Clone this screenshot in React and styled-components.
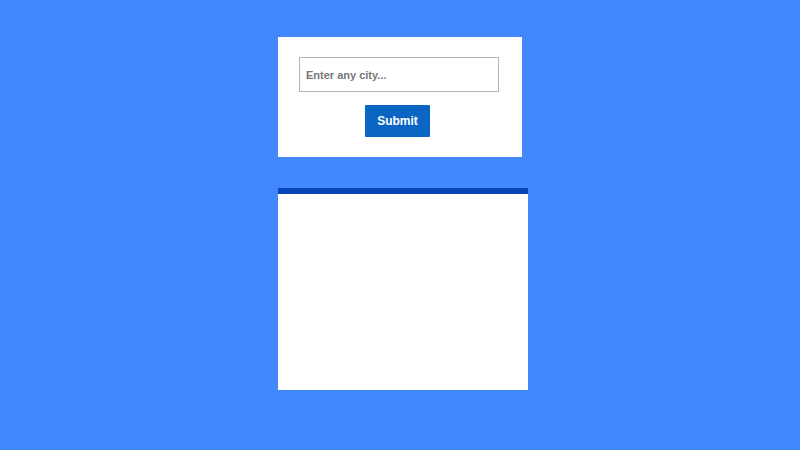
import React from "react";
import styled, { createGlobalStyle } from "styled-components";

const Global = createGlobalStyle`
  html, body { margin: 0; padding: 0; }
  body { background: #4287fe; font-family: "Liberation Sans", Arial, sans-serif; }
`;

const Page = styled.div`
  width: 800px;
  height: 450px;
  box-sizing: border-box;
  padding: 37px 0 0 278px;
  display: flex;
  flex-direction: column;
  gap: 31px;
`;

const FormCard = styled.form`
  width: 244px;
  height: 120px;
  box-sizing: border-box;
  background: #fff;
  padding: 20px 0 0 21px;
  display: flex;
  flex-direction: column;
  align-items: flex-start;
  gap: 13px;
`;

const Input = styled.input`
  width: 200px;
  height: 35px;
  box-sizing: border-box;
  border: 1px solid #b5b5b5;
  padding: 0 6px;
  margin: 0;
  font-family: "Liberation Sans", Arial, sans-serif;
  font-weight: bold;
  font-size: 11px;
  color: #333;
  outline: none;
  &::placeholder { color: #767676; }
`;

const Button = styled.button`
  width: 65px;
  height: 32px;
  border: none;
  border-radius: 1px;
  background: #0a66c2;
  color: #fff;
  font-family: "Liberation Sans", Arial, sans-serif;
  font-weight: bold;
  font-size: 12px;
  margin: 0 0 0 66px;
  padding: 0;
  cursor: pointer;
`;

const ResultCard = styled.div`
  width: 250px;
  height: 202px;
  box-sizing: border-box;
  background: #fff;
  border-top: 6px solid #0645b8;
`;

export default function App() {
  return (
    <>
      <Global />
      <Page>
        <FormCard onSubmit={(e) => e.preventDefault()}>
          <Input placeholder="Enter any city..." />
          <Button type="submit">Submit</Button>
        </FormCard>
        <ResultCard />
      </Page>
    </>
  );
}
